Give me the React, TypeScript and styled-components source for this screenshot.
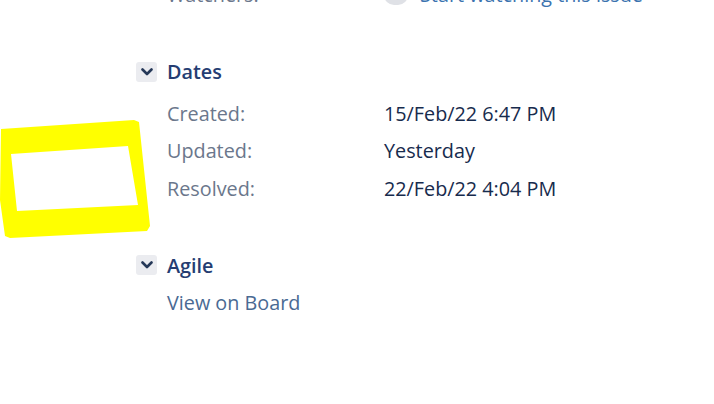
import React from "react";
import styled, { createGlobalStyle } from "styled-components";

const Global = createGlobalStyle`
  html, body { margin: 0; padding: 0; background: #fff; }
  body { font-family: "Open Sans", "Noto Sans", sans-serif; overflow: hidden; }
`;

const Page = styled.div`
  position: relative;
  width: 714px;
  height: 404px;
  overflow: hidden;
  background: #fff;
`;

const Column = styled.div`
  display: flex;
  flex-direction: column;
  padding-left: 136px;
  margin-top: -24px;
`;

const Row = styled.div`
  display: grid;
  grid-template-columns: 217px auto;
  height: 37.5px;
  align-items: center;
  padding-left: 31px;
  font-size: 19.8px;
`;

const Label = styled.span`
  color: #6b778c;
`;

const Value = styled.span`
  color: #172b4d;
  display: flex;
  align-items: center;
  gap: 12px;
`;

const LinkText = styled.span<{ $color?: string }>`
  color: ${(p) => p.$color || "#3b73af"};
`;

const Badge = styled.span`
  display: inline-flex;
  align-items: center;
  justify-content: center;
  min-width: 20px;
  height: 20px;
  padding: 0 2px;
  border-radius: 10px;
  background: #dfe1e6;
  color: #42526e;
  font-size: 14px;
`;

const Section = styled.div<{ $top: number }>`
  display: flex;
  flex-direction: column;
  margin-top: ${(p) => p.$top}px;
`;

const Heading = styled.div<{ $after: number }>`
  display: flex;
  align-items: center;
  gap: 10px;
  height: 38px;
  margin-bottom: ${(p) => p.$after}px;
`;

const Toggle = styled.span`
  display: inline-flex;
  align-items: center;
  justify-content: center;
  width: 21px;
  height: 20px;
  border-radius: 3px;
  background: #ebecf0;
`;

const Title = styled.span`
  font-size: 19.8px;
  font-weight: 600;
  color: #253d72;
`;

const Highlight = styled.svg`
  position: absolute;
  left: 0;
  top: 0;
  pointer-events: none;
`;

const Chevron = () => (
  <svg width="12" height="8" viewBox="0 0 12 8">
    <path d="M1.5 1.5 L6 6 L10.5 1.5" fill="none" stroke="#253858" strokeWidth="2.6" strokeLinecap="round" strokeLinejoin="round" />
  </svg>
);

export default function App() {
  return (
    <Page>
      <Global />
      <Column>
        <Row>
          <Label>Watchers:</Label>
          <Value>
            <Badge>1</Badge>
            <LinkText>Start watching this issue</LinkText>
          </Value>
        </Row>
        <Section $top={39}>
          <Heading $after={4}>
            <Toggle><Chevron /></Toggle>
            <Title>Dates</Title>
          </Heading>
          <Row>
            <Label>Created:</Label>
            <Value>15/Feb/22 6:47 PM</Value>
          </Row>
          <Row>
            <Label>Updated:</Label>
            <Value>Yesterday</Value>
          </Row>
          <Row>
            <Label>Resolved:</Label>
            <Value>22/Feb/22 4:04 PM</Value>
          </Row>
        </Section>
        <Section $top={39}>
          <Heading $after={0}>
            <Toggle><Chevron /></Toggle>
            <Title>Agile</Title>
          </Heading>
          <Row>
            <LinkText $color="#4a6a93">View on Board</LinkText>
          </Row>
        </Section>
      </Column>
      <Highlight width="160" height="250" viewBox="0 0 160 250">
        <path
          fillRule="evenodd"
          fill="#ffff00"
          d="M1 129 L134 120 L139 122 L150 226 L147 231 L10 238 L5 236 L0 200 Z M11 154 L128 146 L138 205 L17 211 Z"
        />
      </Highlight>
    </Page>
  );
}
